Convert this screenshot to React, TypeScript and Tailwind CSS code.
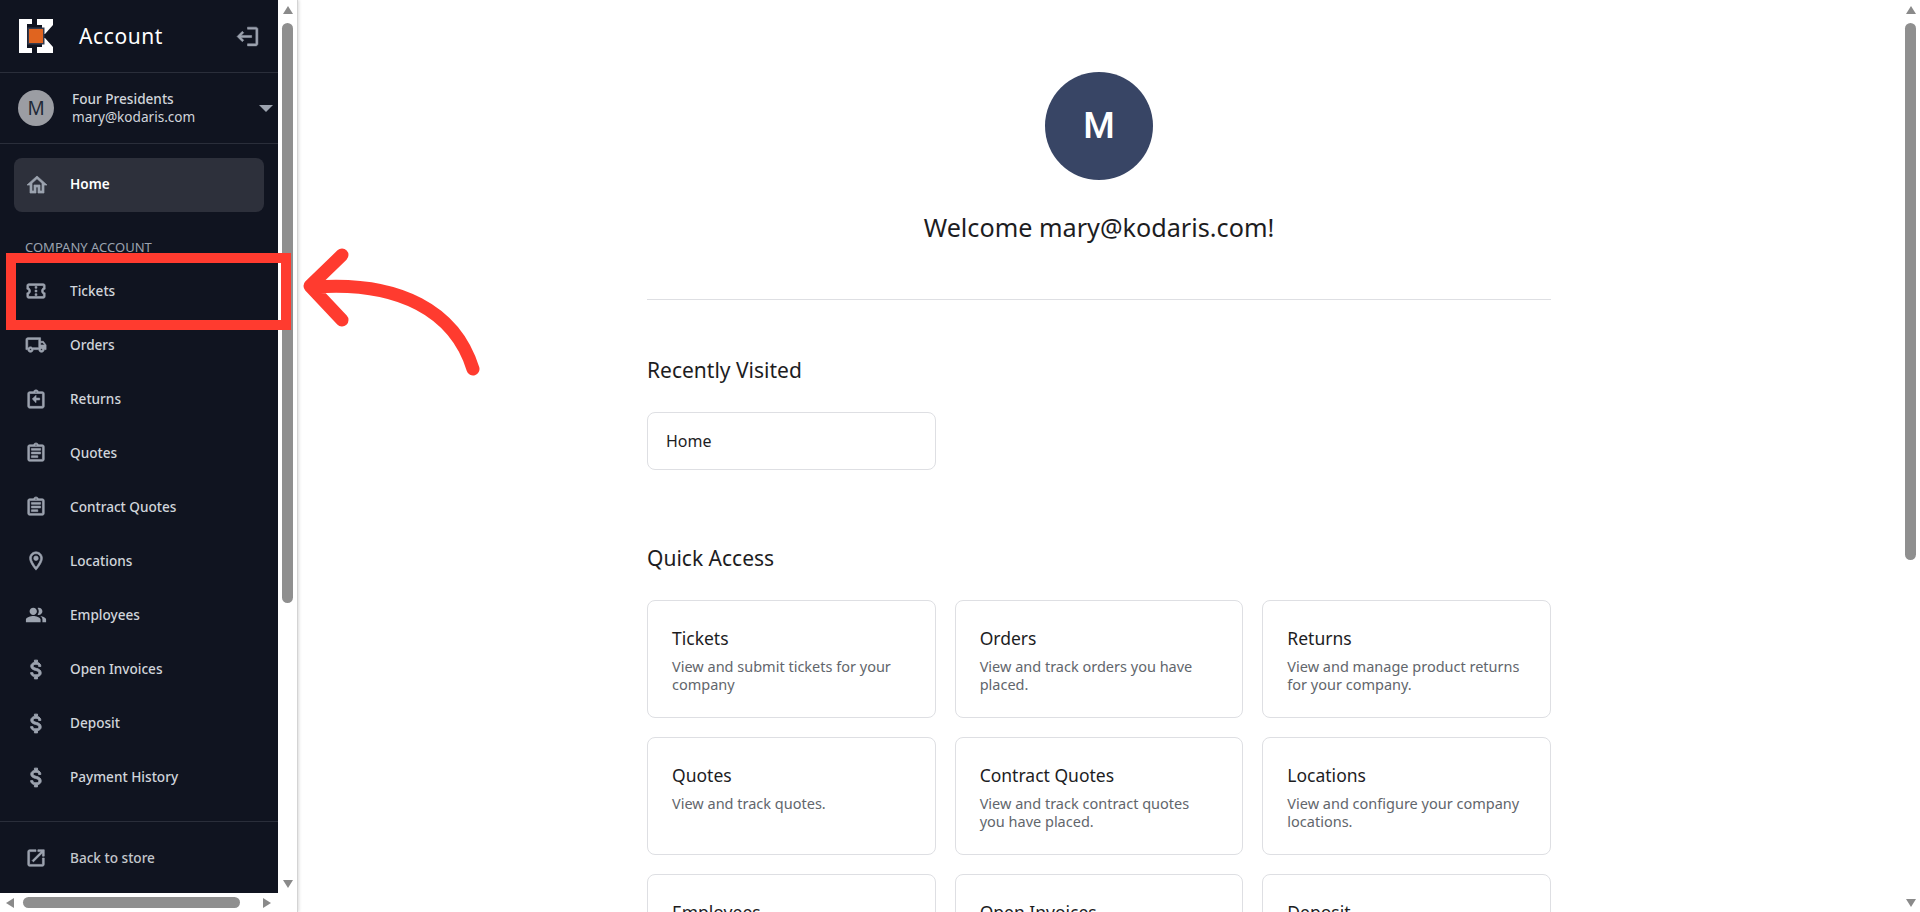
import type { ReactNode } from 'react';

// material outlined paths, drawn with a thin stroke so they read as heavy as the original
const paths = {
  home: 'M12 5.69l5 4.5V18h-2v-6H9v6H7v-7.81l5-4.5M12 3L2 12h3v8h6v-6h2v6h6v-8h3L12 3z',
  ticket:
    'M22 10V6c0-1.11-.9-2-2-2H4c-1.1 0-1.99.89-1.99 2v4c1.1 0 1.99.9 1.99 2s-.89 2-2 2v4c0 1.1.9 2 2 2h16c1.1 0 2-.9 2-2v-4c-1.1 0-2-.9-2-2s.9-2 2-2zm-2-1.46c-1.19.69-2 1.99-2 3.46s.81 2.77 2 3.46V18H4v-2.54c1.19-.69 2-1.99 2-3.46 0-1.48-.8-2.77-1.99-3.46L4 6h16v2.54zM11 15h2v2h-2zm0-4h2v2h-2zm0-4h2v2h-2z',
  truck:
    'M20 8h-3V4H3c-1.1 0-2 .9-2 2v11h2c0 1.66 1.34 3 3 3s3-1.34 3-3h6c0 1.66 1.34 3 3 3s3-1.34 3-3h2v-5l-3-4zm-.5 1.5l1.96 2.5H17V9.5h2.5zM6 18c-.55 0-1-.45-1-1s.45-1 1-1 1 .45 1 1-.45 1-1 1zm2.22-3c-.55-.61-1.33-1-2.22-1s-1.67.39-2.22 1H3V6h12v9H8.22zM18 18c-.55 0-1-.45-1-1s.45-1 1-1 1 .45 1 1-.45 1-1 1z',
  returns:
    'M19 4h-4.18C14.4 2.84 13.3 2 12 2c-1.3 0-2.4.84-2.82 2H5c-1.1 0-2 .9-2 2v14c0 1.1.9 2 2 2h14c1.1 0 2-.9 2-2V6c0-1.1-.9-2-2-2zm-7-.25c.41 0 .75.34.75.75s-.34.75-.75.75-.75-.34-.75-.75.34-.75.75-.75zM19 20H5V6h14v14zm-3-7v-2h-4V8l-4 4 4 4v-3z',
  quote:
    'M7 15h7v2H7zm0-4h10v2H7zm0-4h10v2H7zm12-4h-4.18C14.4 1.84 13.3 1 12 1c-1.3 0-2.4.84-2.82 2H5c-1.1 0-2 .9-2 2v14c0 1.1.9 2 2 2h14c1.1 0 2-.9 2-2V5c0-1.1-.9-2-2-2zm-7-.25c.41 0 .75.34.75.75s-.34.75-.75.75-.75-.34-.75-.75.34-.75.75-.75zM19 19H5V5h14v14z',
  pin: 'M12 2C8.13 2 5 5.13 5 9c0 5.25 7 13 7 13s7-7.75 7-13c0-3.87-3.13-7-7-7zM7 9c0-2.76 2.24-5 5-5s5 2.24 5 5c0 2.88-2.88 7.19-5 9.88C9.92 16.21 7 11.85 7 9zm5-2.5a2.5 2.5 0 1 0 0 5 2.5 2.5 0 0 0 0-5z',
  people:
    'M16.67 13.13C18.04 14.06 19 15.32 19 17v3h4v-3c0-2.18-3.57-3.47-6.33-3.87zM15 12c2.21 0 4-1.79 4-4s-1.79-4-4-4c-.47 0-.91.1-1.33.24C14.5 5.27 15 6.58 15 8s-.5 2.73-1.33 3.76c.42.14.86.24 1.33.24zM9 12c2.21 0 4-1.79 4-4s-1.79-4-4-4-4 1.79-4 4 1.79 4 4 4zm0 1c-2.67 0-8 1.34-8 4v3h16v-3c0-2.66-5.33-4-8-4z',
  money:
    'M11.8 10.9c-2.27-.59-3-1.2-3-2.15 0-1.09 1.01-1.85 2.7-1.85 1.78 0 2.44.85 2.5 2.1h2.21c-.07-1.72-1.12-3.3-3.21-3.81V3h-3v2.16c-1.94.42-3.5 1.68-3.5 3.61 0 2.31 1.91 3.46 4.7 4.13 2.5.6 3 1.48 3 2.41 0 .69-.49 1.79-2.7 1.79-2.06 0-2.87-.92-2.98-2.1h-2.2c.12 2.19 1.76 3.42 3.68 3.83V21h3v-2.15c1.95-.37 3.5-1.5 3.5-3.55 0-2.84-2.43-3.81-4.7-4.4z',
  external:
    'M19 19H5V5h7V3H5c-1.11 0-2 .9-2 2v14c0 1.1.89 2 2 2h14c1.1 0 2-.9 2-2v-7h-2v7zM14 3v2h3.59l-9.83 9.83 1.41 1.41L19 6.41V10h2V3h-7z',
  logout: 'M17 7l-1.41 1.41L18.17 11H8v2h10.17l-2.58 2.58L17 17l5-5zM4 5h8V3H4c-1.1 0-2 .9-2 2v14c0 1.1.9 2 2 2h8v-2H4V5z',
};

function Icon({ d, size = 'h-[22px] w-[22px]', weight = 0.7 }: { d: string; size?: string; weight?: number }) {
  return (
    <svg viewBox="0 0 24 24" className={`${size} fill-current stroke-current`} strokeWidth={weight}>
      <path d={d} />
    </svg>
  );
}

const money = <Icon d={paths.money} size="h-[25px] w-[25px]" weight={0.9} />;

const navItems: { label: string; icon: ReactNode }[] = [
  { label: 'Tickets', icon: <Icon d={paths.ticket} /> },
  { label: 'Orders', icon: <Icon d={paths.truck} /> },
  { label: 'Returns', icon: <Icon d={paths.returns} /> },
  { label: 'Quotes', icon: <Icon d={paths.quote} /> },
  { label: 'Contract Quotes', icon: <Icon d={paths.quote} /> },
  { label: 'Locations', icon: <Icon d={paths.pin} /> },
  { label: 'Employees', icon: <Icon d={paths.people} weight={0} /> },
  { label: 'Open Invoices', icon: money },
  { label: 'Deposit', icon: money },
  { label: 'Payment History', icon: money },
];

const quickAccess = [
  { title: 'Tickets', text: 'View and submit tickets for your company' },
  { title: 'Orders', text: 'View and track orders you have placed.' },
  { title: 'Returns', text: 'View and manage product returns for your company.' },
  { title: 'Quotes', text: 'View and track quotes.' },
  { title: 'Contract Quotes', text: 'View and track contract quotes you have placed.' },
  { title: 'Locations', text: 'View and configure your company locations.' },
  { title: 'Employees', text: 'View and manage employees.' },
  { title: 'Open Invoices', text: 'View and pay open invoices.' },
  { title: 'Deposit', text: 'View and make deposits.' },
];

function Arrow({ dir }: { dir: 'up' | 'down' | 'left' | 'right' }) {
  const points = {
    up: '5,1 10,9 0,9',
    down: '0,1 10,1 5,9',
    left: '9,0 9,10 1,5',
    right: '1,0 9,5 1,10',
  }[dir];
  return (
    <svg viewBox="0 0 10 10" className="h-[10px] w-[10px] fill-[#8a8a8a]">
      <polygon points={points} />
    </svg>
  );
}

function VerticalBar({ thumb }: { thumb: string }) {
  return (
    <div className="flex h-full w-[19px] shrink-0 flex-col items-center bg-white">
      <div className="flex h-[19px] items-center justify-center">
        <Arrow dir="up" />
      </div>
      <div className="flex-1 pt-1">
        <div className={`w-[11px] rounded-full bg-[#8f8f8f] ${thumb}`} />
      </div>
      <div className="flex h-[19px] items-center justify-center">
        <Arrow dir="down" />
      </div>
    </div>
  );
}

function Logo() {
  return (
    <svg viewBox="0 0 34 34" className="h-[34px] w-[34px]">
      <path fill="#fff" d="M0 0h13v5H8v24h5v5H0z" />
      <path fill="#fff" d="M18 0h16v6l-8 9h-3V6h-5zM26 19l8 9v6H18v-6h5v-9z" />
      <rect x="8.500" y="8.500" width="17" height="17" fill="#343a4c" />
      <rect x="10" y="10" width="14" height="14" fill="#e0641f" />
    </svg>
  );
}

function Sidebar() {
  return (
    <aside className="flex w-[278px] flex-1 flex-col bg-[#101420]">
      <div className="flex h-[73px] items-center border-b border-[#2a2e3a] pl-[19px] pr-[18px]">
        <Logo />
        <span className="ml-[26px] flex-1 pt-[2px] text-[21px] tracking-[0.6px] text-white">Account</span>
        <span className="-scale-x-100 text-[#9ca3af]">
          <Icon d={paths.logout} size="h-[25px] w-[25px]" weight={0.5} />
        </span>
      </div>

      <div className="flex h-[71px] items-center border-b border-[#2a2e3a] pl-[18px] pr-[5px]">
        <div className="flex h-9 w-9 items-center justify-center rounded-full bg-[#9b9da3] text-[19px] text-[#1f2937]">
          M
        </div>
        <div className="ml-[18px] flex-1 text-[13.600px] leading-[18px] text-[#d1d5db]">
          <p className="font-medium">Four Presidents</p>
          <p>mary@kodaris.com</p>
        </div>
        <svg viewBox="0 0 14 7" className="h-[7px] w-[14px] fill-[#9ca3af]">
          <polygon points="0,0 14,0 7,7" />
        </svg>
      </div>

      <nav className="flex-1 px-[14px] pt-[14px]">
        <div className="flex h-[54px] items-center rounded-lg bg-[#2d303b] pb-[1px] pl-[11px]">
          <span className="text-[#9ca3af]">
            <Icon d={paths.home} size="h-[24px] w-[24px]" />
          </span>
          <span className="ml-[21px] text-[13.600px] font-semibold text-white">Home</span>
        </div>
        <p className="mt-[25px] ml-[11px] h-5 text-[13px] leading-5 text-[#9ca3af]">COMPANY ACCOUNT</p>
        <div className="mt-[7px]">
          {navItems.map((item) => (
            <div key={item.label} className="flex h-[54px] items-center">
              <span className="flex w-[44px] justify-center text-[#9ca3af]">{item.icon}</span>
              <span className="ml-[12px] text-[13.600px] font-medium text-[#d1d5db]">{item.label}</span>
            </div>
          ))}
        </div>
      </nav>

      <div className="flex h-[72px] items-center border-t border-[#2a2e3a] px-[14px] pt-px">
        <span className="flex w-[44px] justify-center text-[#9ca3af]">
          <Icon d={paths.external} />
        </span>
        <span className="ml-[12px] text-[13.600px] font-medium text-[#c4c7cc]">Back to store</span>
      </div>
    </aside>
  );
}

function Card({ title, text }: { title: string; text: string }) {
  return (
    <div className="h-[118px] rounded-lg border border-[#dedfe3] bg-white pl-[24px] pr-[26px] pt-[25px]">
      <h3 className="text-[17.500px] leading-6 text-[#1d1d1f]">{title}</h3>
      <p className="mt-[7px] text-[14.500px] leading-[18px] text-[#62666c]">{text}</p>
    </div>
  );
}

export default function App() {
  return (
    <div className="relative flex h-screen overflow-hidden bg-white font-['Noto_Sans',sans-serif]">
      <div className="flex h-full w-[298px] shrink-0 flex-col border-r border-[#d4d4d4] shadow-[1px_0_3px_rgba(0,0,0,0.15)]">
        <div className="flex min-h-0 flex-1">
          <Sidebar />
          <VerticalBar thumb="h-[580px]" />
        </div>
        <div className="flex h-[19px] items-center bg-white">
          <div className="flex w-[19px] justify-center">
            <Arrow dir="left" />
          </div>
          <div className="ml-1 h-[11px] w-[217px] rounded-full bg-[#8f8f8f]" />
          <div className="flex-1" />
          <div className="flex w-[38px] justify-start pl-[3px]">
            <Arrow dir="right" />
          </div>
        </div>
      </div>

      <main className="min-w-0 flex-1 overflow-hidden pr-px">
        <div className="mx-auto w-[904px]">
          <div className="mx-auto mt-[72px] flex h-[108px] w-[108px] items-center justify-center rounded-full bg-[#384565] font-['Roboto',sans-serif] text-[36px] font-medium text-white">
            M
          </div>
          <h1 className="mt-[28px] text-center text-[25.200px] leading-[38px] text-[#1d1d1f]">Welcome mary@kodaris.com!</h1>
          <hr className="mt-[53px] border-[#dedfe3]" />
          <h2 className="mt-[55px] text-[21px] leading-[30px] text-[#1d1d1f]">Recently Visited</h2>
          <div className="mt-[27px] grid grid-cols-3 gap-[19px]">
            <div className="flex h-[58px] items-center rounded-lg border border-[#dedfe3] pl-[18px] text-[16px] text-[#1d1d1f]">
              Home
            </div>
          </div>
          <h2 className="mt-[73px] text-[21px] leading-[30px] text-[#1d1d1f]">Quick Access</h2>
          <div className="mt-[27px] grid grid-cols-3 gap-[19px]">
            {quickAccess.map((card) => (
              <Card key={card.title} title={card.title} text={card.text} />
            ))}
          </div>
        </div>
      </main>

      <VerticalBar thumb="h-[537px]" />

      {/* annotation drawn on top of the page */}
      <div className="pointer-events-none absolute left-[6px] top-[253px] h-[77px] w-[285px] border-[10px] border-[#ff3b2f]" />
      <svg
        viewBox="0 0 200 140"
        className="pointer-events-none absolute left-[295px] top-[245px] h-[140px] w-[200px] fill-none stroke-[#ff3b2f]"
      >
        <path
          d="M178 124C160 66 104 36 20 42M47 10 15 41l32 34"
          strokeWidth="13"
          strokeLinecap="round"
          strokeLinejoin="round"
        />
      </svg>
    </div>
  );
}
